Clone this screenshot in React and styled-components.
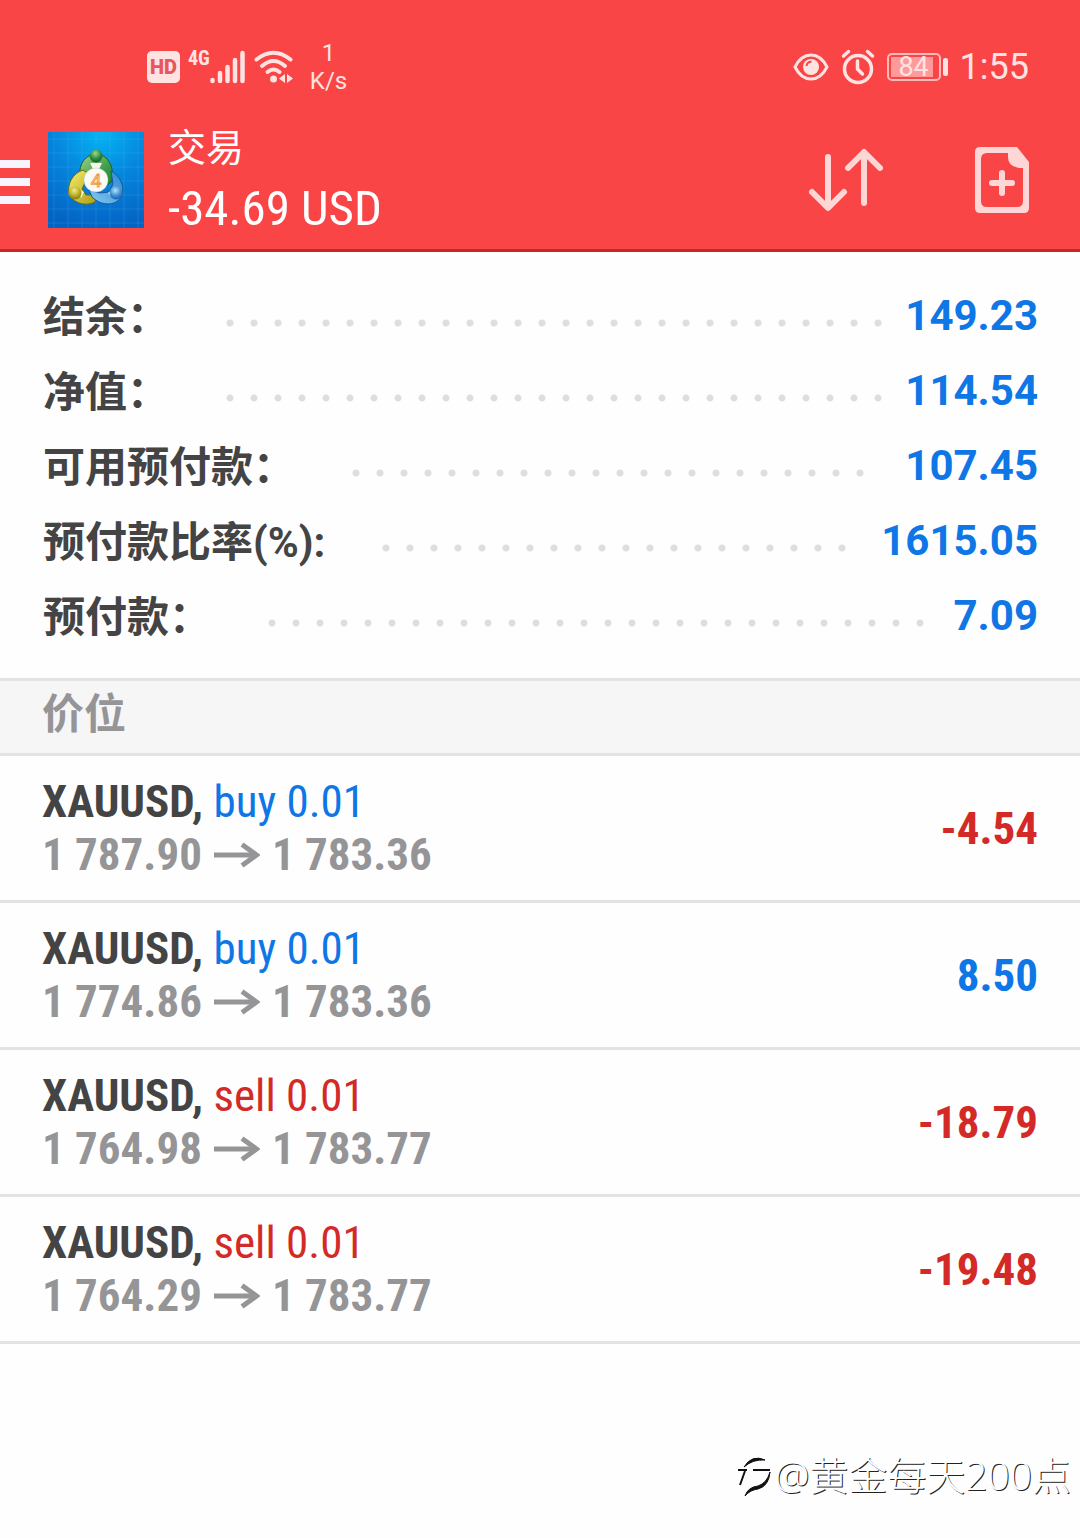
import React from "react";
import styled, { createGlobalStyle } from "styled-components";

const summary = [
   { id: 1, label: "结余：", value: "149.23" },
   { id: 2, label: "净值：", value: "114.54" },
   { id: 3, label: "可用预付款：", value: "107.45" },
   { id: 4, label: "预付款比率(%):", value: "1615.05" },
   { id: 5, label: "预付款：", value: "7.09" },
];

const positions = [
   { id: 1, symbol: "XAUUSD", side: "buy", lots: "0.01", open: "1 787.90", current: "1 783.36", profit: "-4.54" },
   { id: 2, symbol: "XAUUSD", side: "buy", lots: "0.01", open: "1 774.86", current: "1 783.36", profit: "8.50" },
   { id: 3, symbol: "XAUUSD", side: "sell", lots: "0.01", open: "1 764.98", current: "1 783.77", profit: "-18.79" },
   { id: 4, symbol: "XAUUSD", side: "sell", lots: "0.01", open: "1 764.29", current: "1 783.77", profit: "-19.48" },
];

const StatusBar = () => (
   <StatusDIV>
      <StatusGroup gap={8}>
         <HdBadge>HD</HdBadge>
         <SignalDIV>
            <NetLabel>4G</NetLabel>
            <svg width="36" height="34" viewBox="0 0 36 34">
               <path d="M2.500 30v1M10 23v8M17.500 17v14M25 10v21M32.500 3v28" stroke="#ffe3e3" strokeWidth="4.500" strokeLinecap="round" />
            </svg>
         </SignalDIV>
         <svg width="40" height="34" viewBox="0 0 40 34">
            <g fill="none" stroke="#ffe3e3" strokeWidth="4" strokeLinecap="round">
               <path d="M2.500 9.500Q19.500-4 36.500 9.500" />
               <path d="M8 16Q19.500 6 31 16" />
               <path d="M13.500 22Q19.500 17 25.500 22" />
            </g>
            <circle cx="19.500" cy="29" r="3.500" fill="#ffe3e3" />
            <path d="M31 24v9l-6-4.500zM33 24v9l6-4.500z" fill="#ffe3e3" />
         </svg>
         <SpeedDIV>
            <span>1</span>
            <span>K/s</span>
         </SpeedDIV>
      </StatusGroup>
      <StatusGroup gap={12}>
         <svg width="36" height="28" viewBox="0 0 36 28">
            <path d="M2 14C10-2 26-2 34 14C26 30 10 30 2 14z" fill="none" stroke="#ffe3e3" strokeWidth="3" />
            <circle cx="18" cy="14" r="8" fill="#ffe3e3" />
            <path d="M13.500 13q.5-4 5-4.500" fill="none" stroke="#fa4546" strokeWidth="2" />
         </svg>
         <svg width="34" height="36" viewBox="0 0 34 36">
            <g fill="none" stroke="#ffe3e3" strokeWidth="3.500" strokeLinecap="round">
               <circle cx="17" cy="20" r="13.500" />
               <path d="M2.500 7l5-4.500M31.500 7l-5-4.500M16.500 12v8l5 5" />
            </g>
         </svg>
         <BatteryDIV>
            <BatteryBody>84</BatteryBody>
            <BatteryTip />
         </BatteryDIV>
         <Clock>1:55</Clock>
      </StatusGroup>
   </StatusDIV>
);

const Logo = () => (
   <svg width="96" height="96" viewBox="0 0 96 96">
      <defs>
         <radialGradient id="sky" cx="55%" cy="0%" r="100%">
            <stop offset="0" stopColor="#06b4f2" />
            <stop offset="0.5" stopColor="#0585dd" />
            <stop offset="1" stopColor="#0464c4" />
         </radialGradient>
         <linearGradient id="green" x1="0" y1="0" x2="1" y2="1">
            <stop offset="0" stopColor="#a5d58c" />
            <stop offset="0.6" stopColor="#3f9e4a" />
            <stop offset="1" stopColor="#1b8231" />
         </linearGradient>
         <linearGradient id="yellow" x1="0" y1="0" x2="1" y2="1">
            <stop offset="0" stopColor="#f5ec69" />
            <stop offset="1" stopColor="#a99d17" />
         </linearGradient>
         <linearGradient id="blue" x1="1" y1="0" x2="0" y2="1">
            <stop offset="0" stopColor="#2c86cf" />
            <stop offset="1" stopColor="#86c9f2" />
         </linearGradient>
         <radialGradient id="greenBall" cx="45%" cy="30%" r="70%">
            <stop offset="0" stopColor="#9fd693" />
            <stop offset="0.6" stopColor="#2c8c40" />
            <stop offset="1" stopColor="#176328" />
         </radialGradient>
         <radialGradient id="yellowBall" cx="45%" cy="30%" r="70%">
            <stop offset="0" stopColor="#f4ec8f" />
            <stop offset="0.6" stopColor="#b9aa20" />
            <stop offset="1" stopColor="#857a10" />
         </radialGradient>
         <radialGradient id="blueBall" cx="45%" cy="30%" r="70%">
            <stop offset="0" stopColor="#b5e2fa" />
            <stop offset="0.6" stopColor="#3b8fd4" />
            <stop offset="1" stopColor="#1c62ad" />
         </radialGradient>
      </defs>
      <rect width="96" height="96" fill="url(#sky)" />
      <path d="M6 0v96M20 0v96M34 0v96M48 0v96M62 0v96M76 0v96M90 0v96M0 7h96M0 21h96M0 35h96M0 49h96M0 63h96M0 77h96M0 91h96" stroke="#5cc0f5" strokeOpacity="0.2" />
      <path d="M32 45C30 31 39 22 48 22S67 31 64 49L58 54L52 40H43L37 46z" fill="url(#green)" stroke="#165f2d" strokeWidth="1" />
      <path d="M35 38C25 41 19 52 21 61C24 71 38 75 47 70L50 63L38 63L34 57L41 42z" fill="url(#yellow)" stroke="#696817" strokeWidth="1" />
      <path d="M63 39C71 43 77 53 74 63C70 74 54 75 44 65L41 58L52 61L61 60L65 52z" fill="url(#blue)" stroke="#135a9c" strokeWidth="1" />
      <path d="M42 31h12l-3 6h-6zM30 56l6 4-3 6zM66 56l-6 5 4 4z" fill="#f4f8ef" />
      <circle cx="48" cy="24" r="6.500" fill="url(#greenBall)" />
      <circle cx="27" cy="61" r="6.500" fill="url(#yellowBall)" />
      <circle cx="68" cy="61" r="6.500" fill="url(#blueBall)" />
      <circle cx="48" cy="48" r="12" fill="#fbfaf7" stroke="#b9c6b4" strokeWidth="0.500" />
      <text x="48" y="55" textAnchor="middle" fontFamily="Roboto, sans-serif" fontSize="19" fill="#fbe3c6" stroke="#f19a4b" strokeWidth="1">4</text>
   </svg>
);

const Arrow = () => (
   <ArrowSvg width="46" height="28" viewBox="0 0 46 28">
      <path d="M0 14H42" stroke="#959597" strokeWidth="5" />
      <path d="M28 3.500L42.500 14L28 24.500" stroke="#959597" strokeWidth="5" fill="none" />
   </ArrowSvg>
);

const Position = (props) => (
   <PositionRow>
      <div>
         <SymbolLine>
            {props.symbol}, <Side side={props.side}>{props.side} {props.lots}</Side>
         </SymbolLine>
         <PriceLine>
            {props.open}<Arrow />{props.current}
         </PriceLine>
      </div>
      <Profit loss={props.profit.startsWith("-") ? 1 : 0}>{props.profit}</Profit>
   </PositionRow>
);

const App = () => {
   let SummaryRows = summary.map((d) => (
      <SummaryRow key={d.id}>
         <dt>{d.label}</dt>
         <Dots aria-hidden="true"><i /></Dots>
         <dd>{d.value}</dd>
      </SummaryRow>
   ))
   let Positions = positions.map((d) => <Position key={d.id} {...d} />)
   return (
      <PageDIV>
         <GlobalStyle />
         <Header>
            <StatusBar />
            <ToolbarDIV>
               <MenuButton aria-label="Menu"><span /><span /><span /></MenuButton>
               <Logo />
               <TitleDIV>
                  <Title>交易</Title>
                  <Amount>-34.69 USD</Amount>
               </TitleDIV>
               <IconButton aria-label="Sort">
                  <svg width="74" height="66" viewBox="0 0 74 66">
                     <path d="M19 10V60M3 45L19 61L35 45M55 56V6M39 21L55 5L71 21" stroke="#ffd6d6" strokeWidth="6" fill="none" strokeLinecap="round" strokeLinejoin="round" />
                  </svg>
               </IconButton>
               <IconButton aria-label="New order">
                  <svg width="54" height="66" viewBox="0 0 54 66">
                     <path fillRule="evenodd" d="M5 0H42L54 15V61Q54 66 49 66H5Q0 66 0 61V5Q0 0 5 0zM12 6Q6 6 6 12V54Q6 60 12 60H42Q48 60 48 54V21H45Q33 20 33 10V6z" fill="#ffd6d6" />
                     <path d="M27 26V46M17 36H37" stroke="#ffd6d6" strokeWidth="6" strokeLinecap="round" />
                  </svg>
               </IconButton>
            </ToolbarDIV>
         </Header>
         <main>
            <SummaryList>{SummaryRows}</SummaryList>
            <SectionTitle>价位</SectionTitle>
            <PositionList>{Positions}</PositionList>
         </main>
         <Watermark>
            <svg width="38" height="44" viewBox="0 0 38 44">
               <path d="M3 32L8 18M1 17H10M16 17H33" stroke="#111" strokeWidth="2" fill="none" />
               <path d="M7 14Q15 1 28 7Q16 6 7 14zM33 19Q32 33 21 36Q13 37 8 43Q11 34 21 33Q30 30 33 19z" fill="#111" stroke="#111" />
            </svg>
            @黄金每天200点
         </Watermark>
      </PageDIV>
   )
};

export default App;

const GlobalStyle = createGlobalStyle`
   * {
      box-sizing: border-box;
   }
   body {
      margin: 0;
      background-color: #fefefe;
      font-family: Roboto, "Noto Sans CJK SC", sans-serif;
   }
   svg {
      display: block;
      flex-shrink: 0;
   }
`;

const condensed = `"Roboto Condensed", "Liberation Sans Narrow", Roboto, "Noto Sans CJK SC", sans-serif`;

const PageDIV = styled.div`
   display: flex;
   flex-direction: column;
   min-height: 100vh;
`;

const Header = styled.header`
   background-color: #fa4546;
   border-bottom: 3px solid #bf2a2c;
   color: #fff;
   padding: 31px 0 6px;
`;

const StatusDIV = styled.div`
   display: flex;
   justify-content: space-between;
   align-items: center;
   height: 72px;
   padding: 0 51px 0 147px;
   color: #ffe3e3;
`;

const StatusGroup = styled.div`
   display: flex;
   align-items: center;
   gap: ${(props) => props.gap}px;
`;

const HdBadge = styled.span`
   width: 33px;
   height: 32px;
   border-radius: 5px;
   background-color: #ffe3e3;
   color: #e8585a;
   font-size: 20px;
   font-weight: 900;
   line-height: 32px;
   text-align: center;
`;

const SignalDIV = styled.div`
   display: flex;
   align-items: flex-start;
`;

const NetLabel = styled.span`
   font: bold 20px/16px ${condensed};
`;

const SpeedDIV = styled.div`
   display: flex;
   flex-direction: column;
   align-items: center;
   margin-left: 8px;
   font-size: 24px;
   line-height: 28px;
`;

const BatteryDIV = styled.div`
   display: flex;
   align-items: center;
   gap: 2px;
`;

const BatteryBody = styled.span`
   width: 54px;
   height: 28px;
   border: 2px solid #ffb9b9;
   border-radius: 5px;
   background: linear-gradient(#ff9a9a, #ff9a9a) 2px center / 42px 20px no-repeat;
   font-size: 27px;
   line-height: 25px;
   text-align: center;
`;

const BatteryTip = styled.span`
   width: 5px;
   height: 18px;
   border-radius: 2px;
   background-color: #ffe3e3;
`;

const Clock = styled.time`
   font-size: 36px;
   line-height: 40px;
`;

const ToolbarDIV = styled.div`
   display: flex;
   align-items: center;
   height: 126px;
   margin-top: 14px;
   padding-right: 51px;
`;

const MenuButton = styled.button`
   display: flex;
   flex-direction: column;
   gap: 10px;
   width: 48px;
   padding: 4px 0 0;
   border: 0;
   background: none;
   span {
      width: 30px;
      height: 8px;
      background-color: #f8f4ff;
   }
`;

const TitleDIV = styled.div`
   flex: 1;
   padding-left: 24px;
`;

const Title = styled.h1`
   margin: 0;
   font-size: 38px;
   font-weight: 400;
   line-height: 58px;
`;

const Amount = styled.div`
   font: 49px/64px ${condensed};
`;

const IconButton = styled.button`
   padding: 0;
   border: 0;
   background: none;
   & + & {
      margin-left: 92px;
   }
`;

const SummaryList = styled.dl`
   margin: 0;
   padding: 26px 42px 25px 43px;
   border-bottom: 3px solid #e3e3e5;
`;

const SummaryRow = styled.div`
   display: flex;
   align-items: center;
   height: 75px;
   font-size: 42px;
   font-weight: 700;
   dt {
      padding-bottom: 4px;
      color: #444;
   }
   dd {
      margin: 0;
      color: #0f76e6;
   }
`;

/* leader width snaps to whole 24px steps so that no dot is cut */
const Dots = styled.span`
   flex: 1;
   height: 8px;
   margin: 14px 4px 0 57px;
   i {
      display: block;
      width: round(down, 100%, 24px);
      height: 8px;
      background: radial-gradient(circle at 4px 4px, #dedede 3px, transparent 4px) 0 0 / 24px 8px repeat-x;
   }
`;

const SectionTitle = styled.h2`
   margin: 0;
   height: 75px;
   padding-left: 42px;
   border-bottom: 3px solid #e3e3e5;
   background-color: #f6f6f7;
   color: #959597;
   font-size: 42px;
   font-weight: 700;
   line-height: 68px;
`;

const PositionList = styled.ul`
   margin: 0;
   padding: 0;
   list-style: none;
`;

const PositionRow = styled.li`
   display: flex;
   justify-content: space-between;
   align-items: center;
   height: 147px;
   padding: 0 42px;
   border-bottom: 3px solid #e3e3e5;
   font: bold 45px/53px ${condensed};
`;

const SymbolLine = styled.div`
   color: #444;
`;

const Side = styled.span`
   font-weight: 400;
   color: ${(props) => (props.side === "buy" ? "#0f76e6" : "#d42a27")};
`;

const PriceLine = styled.div`
   display: flex;
   align-items: center;
   color: #959597;
`;

const ArrowSvg = styled.svg`
   margin: 0 12px;
`;

const Profit = styled.span`
   color: ${(props) => (props.loss ? "#d42a27" : "#0f76e6")};
`;

const Watermark = styled.footer`
   display: flex;
   align-items: center;
   justify-content: flex-end;
   margin-top: auto;
   padding: 0 9px 38px 0;
   color: #fff;
   font: 300 39px/50px "Open Sans", "Noto Sans CJK SC", sans-serif;
   text-shadow: 1px 1px 0 #222;
`;
